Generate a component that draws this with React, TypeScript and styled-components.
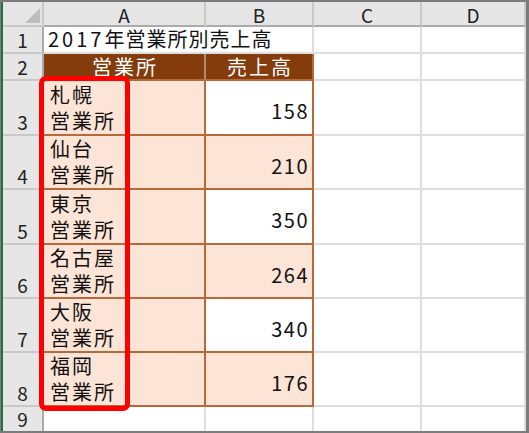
import React from "react";
import styled, { createGlobalStyle, css } from "styled-components";

const Global = createGlobalStyle`
  html, body { margin: 0; padding: 0; background: #ffffff; overflow: hidden; }
  body { font-family: "Noto Sans CJK JP", "Noto Sans", sans-serif; }
`;

const GRID = "#dedede";
const HEAD_LINE = "#c9c9c9";
const BROWN_LINE = "#b8693a";
const HEAD_BG = "#e6e6e6";
const PEACH = "#fce4d6";
const DARK = "#843c0c";

const Frame = styled.div`
  position: relative;
  width: 529px;
  height: 433px;
  box-sizing: border-box;
  border-top: 2px solid #7c7c7c;
  border-right: 3px solid #7c7c7c;
  border-bottom: 2px solid #7c7c7c;
  border-left: 1px solid #7c7c7c;
  overflow: hidden;
`;

const Sheet = styled.div`
  height: 100%;
  box-sizing: border-box;
  border-left: 2px solid #217346;
  display: grid;
  grid-template-columns: 41px 162px 108px 108px 1fr;
  grid-template-rows: 25px 27px 27px 55px 54px 55px 54px 54px 54px 1fr;
  font-family: "Noto Sans CJK JP", "Noto Sans", sans-serif;
  font-size: 20px;
  color: #111;
`;

const Corner = styled.div`
  background: ${HEAD_BG};
  border-right: 2px solid ${HEAD_LINE};
  border-bottom: 2px solid ${HEAD_LINE};
  display: flex;
  align-items: flex-end;
  justify-content: flex-end;
  padding: 0 2px 2px 0;
`;

const ColHead = styled.div`
  background: ${HEAD_BG};
  border-right: 2px solid ${HEAD_LINE};
  border-bottom: 2px solid #ababab;
  display: flex;
  align-items: center;
  justify-content: center;
  font-size: 19px;
  color: #222;
  line-height: 1;
  padding-top: 1px;
`;

const RowHead = styled.div`
  background: ${HEAD_BG};
  border-right: 2px solid #ababab;
  border-bottom: 2px solid ${HEAD_LINE};
  display: flex;
  align-items: flex-end;
  justify-content: center;
  font-size: 19px;
  line-height: 24px;
  color: #222;
`;

const Cell = styled.div<{ $span?: number }>`
  border-right: 2px solid ${GRID};
  border-bottom: 2px solid ${GRID};
  ${(p) => p.$span && css`grid-column: span ${p.$span};`}
`;

const Title = styled(Cell)`
  display: flex;
  align-items: flex-end;
  padding-left: 4px;
  line-height: 26px;
  white-space: nowrap;
  letter-spacing: 1px;
`;

const Year = styled.span`
  letter-spacing: 3px;
`;

const HeadCell = styled.div<{ $last?: boolean }>`
  background: ${DARK};
  color: #ffffff;
  border-right: 2px solid ${(p) => (p.$last ? BROWN_LINE : "#a98a76")};
  border-bottom: 2px solid ${BROWN_LINE};
  display: flex;
  align-items: center;
  justify-content: center;
  line-height: 1;
  letter-spacing: 2px;
  padding: 1px 0 0 2px;
`;

const NameCell = styled.div`
  background: ${PEACH};
  border-right: 2px solid ${BROWN_LINE};
  border-bottom: 2px solid ${BROWN_LINE};
  display: flex;
  flex-direction: column;
  justify-content: flex-end;
  padding-left: 6px;
  line-height: 26px;
  letter-spacing: 2px;
`;

const ValueCell = styled.div<{ $shaded: boolean }>`
  background: ${(p) => (p.$shaded ? PEACH : "#ffffff")};
  border-right: 2px solid ${BROWN_LINE};
  border-bottom: 2px solid ${BROWN_LINE};
  display: flex;
  align-items: center;
  justify-content: flex-end;
  padding: 6px 3px 0 0;
  letter-spacing: 1.5px;
`;

const Highlight = styled.div`
  position: absolute;
  left: 38px;
  top: 74px;
  width: 91px;
  height: 335px;
  box-sizing: border-box;
  border: 5px solid #ff0000;
  border-radius: 7px;
  pointer-events: none;
`;

const rows = [
  { city: "札幌", value: 158 },
  { city: "仙台", value: 210 },
  { city: "東京", value: 350 },
  { city: "名古屋", value: 264 },
  { city: "大阪", value: 340 },
  { city: "福岡", value: 176 },
];

export default function App() {
  return (
    <>
      <Global />
      <Frame>
        <Sheet>
          <Corner>
            <svg width="15" height="15" viewBox="0 0 15 15">
              <polygon points="15,0 15,15 0,15" fill="#bdbdbd" />
            </svg>
          </Corner>
          <ColHead>A</ColHead>
          <ColHead>B</ColHead>
          <ColHead>C</ColHead>
          <ColHead>D</ColHead>

          <RowHead>1</RowHead>
          <Title $span={2}>
            <Year>2017</Year>年営業所別売上高
          </Title>
          <Cell />
          <Cell />

          <RowHead>2</RowHead>
          <HeadCell>営業所</HeadCell>
          <HeadCell $last>売上高</HeadCell>
          <Cell />
          <Cell />

          {rows.map((r, i) => (
            <React.Fragment key={r.city}>
              <RowHead>{i + 3}</RowHead>
              <NameCell>
                <span>{r.city}</span>
                <span>営業所</span>
              </NameCell>
              <ValueCell $shaded={i % 2 === 1}>{r.value}</ValueCell>
              <Cell />
              <Cell />
            </React.Fragment>
          ))}

          <RowHead>9</RowHead>
          <Cell />
          <Cell />
          <Cell />
          <Cell />
        </Sheet>
        <Highlight />
      </Frame>
    </>
  );
}
